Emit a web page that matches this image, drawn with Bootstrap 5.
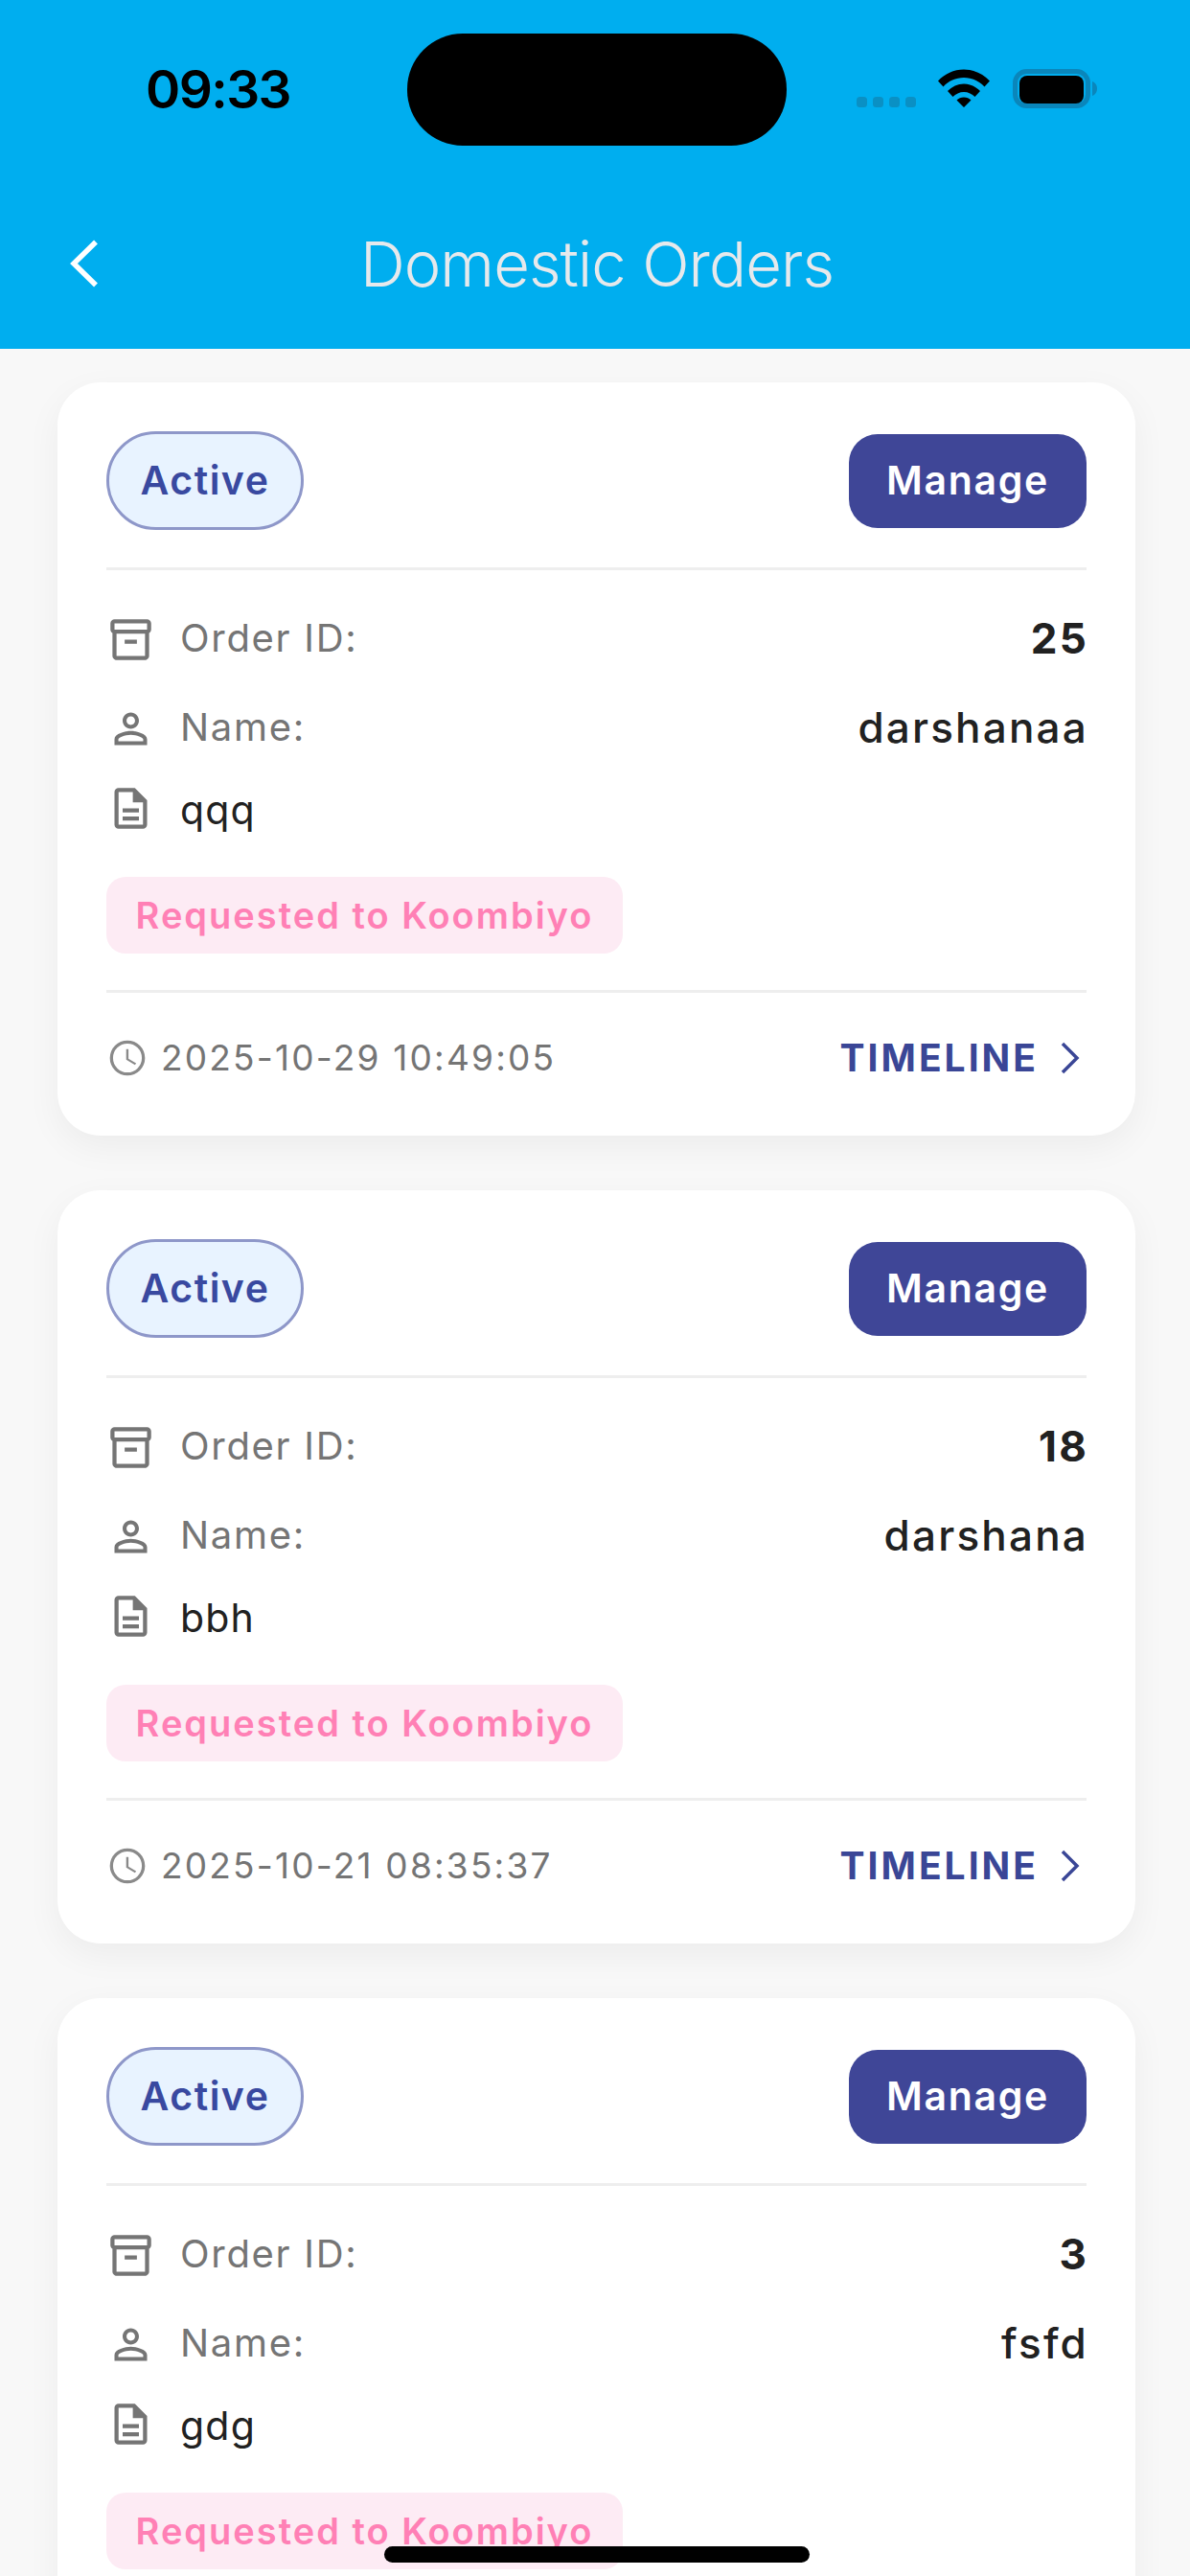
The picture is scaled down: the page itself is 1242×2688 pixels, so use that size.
<!DOCTYPE html>
<html lang="en">
<head>
<meta charset="utf-8">
<title>Domestic Orders</title>
<link rel="stylesheet" href="https://cdn.jsdelivr.net/npm/bootstrap@5.3.0/dist/css/bootstrap.min.css">
<style>
html,body{margin:0;height:2688px;overflow:hidden}
body{background:#f8f8f8;font-family:Inter,"Liberation Sans",sans-serif;color:#212121;position:relative}
.app-top{background:#00aeef;height:364px;color:#e6e9ec}
.status-line{height:152px;padding-top:35px;padding-left:152px}
.clock-time{font-weight:600;font-size:55px;line-height:117px;color:#000;width:273px;letter-spacing:-1.6px}
.island{width:396px;height:117px;background:#000;border-radius:58px}
.status-icons{margin-left:73px;height:117px;padding-top:37px}
.sig-dots{gap:6px;padding-top:29px;width:85px}
.sig-dots i{display:block;width:11px;height:11px;border-radius:3.5px;background:#0a90c4}
.title-line{height:212px;padding-top:86px;padding-left:73px}
.back-icon{width:30px;height:50px;margin-top:12px}
.page-title{font-size:65px;line-height:76px;font-weight:300;width:1066px;padding-right:26px;text-align:center;letter-spacing:-.9px;color:#e6e9ec}
.order-list{padding:35px 57px 0 60px;height:2324px;overflow:hidden}
.order-card{border:0;border-radius:45px;background:#fff;box-shadow:0 12px 36px rgba(0,0,0,.05);padding:51px 51px 55px;margin-bottom:57px}
.state-pill{width:206px;height:103px;border:3px solid #8e97c9;background:#e8f3ff;border-radius:52px;color:#3949a0;font-size:41px;font-weight:600;letter-spacing:1.5px}
.manage-btn{width:248px;height:98px;border:0;border-radius:30px;background:#3f4697;color:#fff;font-size:41px;font-weight:600;letter-spacing:1.7px;padding:0}
.manage-btn:hover{background:#3f4697;color:#fff}
.rule{height:3px;background:#eee;margin:39px 0 0}
.info-line{height:51px}
.info-line svg{width:51px;height:51px;margin-right:27px;fill:#757575;flex:none}
.first-line{margin-top:46.5px}
.second-line{margin-top:42px}
.third-line{margin-top:32px}
.info-key{font-size:40px;color:#757575;letter-spacing:1.7px;margin-left:-1px;margin-top:-3px}
.info-num{font-size:44px;font-weight:700;color:#212121;letter-spacing:2.2px;margin-top:-3px;margin-right:-2px}
.info-val{font-size:44px;font-weight:500;color:#212121;letter-spacing:2.2px;margin-top:-3px;margin-right:-2px}
.info-text{font-size:41px;color:#212121;letter-spacing:1.2px;margin-top:6px;margin-left:-1px}
.req-tag{margin-top:46.5px;height:80px;width:539px;background:#fdebf4;border-radius:20px;color:#ff80b5;font-size:38px;font-weight:600;letter-spacing:2px}
.foot-rule{margin-top:38px}
.foot-line{height:52px;margin-top:42px}
.foot-time{font-size:37px;color:#757575;letter-spacing:2.2px}
.foot-time svg{width:44px;height:44px;margin-right:13px;fill:#8a8a8a;flex:none}
.timeline-link{font-size:39px;font-weight:700;color:#3a4696;letter-spacing:3px}
.timeline-link svg{width:22px;height:36px;margin-left:22px;margin-right:6px}
.home-bar{position:absolute;left:401px;top:2657px;width:444px;height:17px;background:#000;border-radius:9px}
</style>
</head>
<body>
<header class="app-top">
  <div class="status-line d-flex align-items-start">
    <div class="clock-time">09:33</div>
    <div class="island"></div>
    <div class="status-icons d-flex">
      <div class="sig-dots d-flex align-items-start"><i></i><i></i><i></i><i></i></div>
      <svg width="54" height="40" viewBox="0 0 54 40"><path d="M0 12.500C7 5 16.500 .5 27 .5S47 5 54 12.500L48.500 18.500C43 12.500 35.500 9 27 9S11 12.500 5.500 18.500Z M10 23C14.500 18.500 20.500 15.500 27 15.500S39.500 18.500 44 23L38.500 29C35.500 26 31.500 24 27 24S18.500 26 15.500 29Z M19.500 32.500C21.500 30.500 24 29.500 27 29.500S32.500 30.500 34.500 32.500L27 40Z" fill="#000"/></svg>
      <svg class="ms-4" width="88" height="42" viewBox="0 0 88 42"><rect x="2.500" y="2.500" width="76" height="36" rx="12" fill="none" stroke="#0a86bb" stroke-width="5"/><rect x="7" y="7" width="67" height="29" rx="8" fill="#000"/><path d="M83 13c3 1 5 4 5 7.500S86 27 83 28Z" fill="#0a86bb"/></svg>
    </div>
  </div>
  <div class="title-line d-flex align-items-start">
    <svg class="back-icon" viewBox="0 0 30 50"><path d="M27 2.500 4 25l23 22.500" fill="none" stroke="#fff" stroke-width="5.500"/></svg>
    <h1 class="page-title m-0">Domestic Orders</h1>
  </div>
</header>
<main class="order-list">
  <section class="card order-card">
    <div class="d-flex justify-content-between align-items-center">
      <span class="state-pill d-flex align-items-center justify-content-center">Active</span>
      <button type="button" class="btn manage-btn">Manage</button>
    </div>
    <div class="rule"></div>
    <div class="info-line first-line d-flex align-items-center">
      <svg viewBox="0 0 24 24"><path d="M20 2H4c-1 0-2 .9-2 2v3.010c0 .72.43 1.340 1 1.690V20c0 1.100 1.100 2 2 2h14c.9 0 2-.9 2-2V8.700c.57-.35 1-.97 1-1.690V4c0-1.100-1-2-2-2zm-1 18H5V9h14v11zm1-13H4V4h16v3zM9 12h6v2H9z"/></svg>
      <span class="info-key">Order ID:</span><span class="info-num ms-auto">25</span>
    </div>
    <div class="info-line second-line d-flex align-items-center">
      <svg viewBox="0 0 24 24"><path d="M12 5.900c1.160 0 2.100.94 2.100 2.100s-.94 2.100-2.100 2.100S9.900 9.160 9.900 8s.94-2.100 2.100-2.100m0 9c2.970 0 6.100 1.460 6.100 2.100v1.100H5.900V17c0-.64 3.130-2.100 6.100-2.100M12 4C9.790 4 8 5.790 8 8s1.790 4 4 4 4-1.790 4-4-1.790-4-4-4zm0 9c-2.670 0-8 1.340-8 4v3h16v-3c0-2.660-5.330-4-8-4z"/></svg>
      <span class="info-key">Name:</span><span class="info-val ms-auto">darshanaa</span>
    </div>
    <div class="info-line third-line d-flex align-items-center">
      <svg viewBox="0 0 24 24"><path d="M8 16h8v2H8zm0-4h8v2H8zm6-10H6c-1.100 0-2 .9-2 2v16c0 1.100.89 2 1.990 2H18c1.100 0 2-.9 2-2V8l-6-6zm4 18H6V4h7v5h5v11z"/></svg>
      <span class="info-text">qqq</span>
    </div>
    <div class="req-tag d-flex align-items-center justify-content-center">Requested to Koombiyo</div>
    <div class="rule foot-rule"></div>
    <div class="foot-line d-flex align-items-center justify-content-between">
      <span class="foot-time d-flex align-items-center"><svg viewBox="0 0 24 24"><path d="M12 2a10 10 0 1 0 0 20 10 10 0 0 0 0-20zm0 18.200a8.200 8.200 0 1 1 0-16.400 8.200 8.200 0 0 1 0 16.400zM12.600 7h-1.300v6l5 3 .65-1.050-4.350-2.600z"/></svg>2025-10-29 10:49:05</span>
      <span class="timeline-link d-flex align-items-center">TIMELINE<svg viewBox="0 0 22 36"><path d="M3 3l15 15L3 33" fill="none" stroke="#3a4696" stroke-width="3.500"/></svg></span>
    </div>
  </section>
  <section class="card order-card">
    <div class="d-flex justify-content-between align-items-center">
      <span class="state-pill d-flex align-items-center justify-content-center">Active</span>
      <button type="button" class="btn manage-btn">Manage</button>
    </div>
    <div class="rule"></div>
    <div class="info-line first-line d-flex align-items-center">
      <svg viewBox="0 0 24 24"><path d="M20 2H4c-1 0-2 .9-2 2v3.010c0 .72.43 1.340 1 1.690V20c0 1.100 1.100 2 2 2h14c.9 0 2-.9 2-2V8.700c.57-.35 1-.97 1-1.690V4c0-1.100-1-2-2-2zm-1 18H5V9h14v11zm1-13H4V4h16v3zM9 12h6v2H9z"/></svg>
      <span class="info-key">Order ID:</span><span class="info-num ms-auto">18</span>
    </div>
    <div class="info-line second-line d-flex align-items-center">
      <svg viewBox="0 0 24 24"><path d="M12 5.900c1.160 0 2.100.94 2.100 2.100s-.94 2.100-2.100 2.100S9.900 9.160 9.900 8s.94-2.100 2.100-2.100m0 9c2.970 0 6.100 1.460 6.100 2.100v1.100H5.900V17c0-.64 3.130-2.100 6.100-2.100M12 4C9.790 4 8 5.790 8 8s1.790 4 4 4 4-1.790 4-4-1.790-4-4-4zm0 9c-2.670 0-8 1.340-8 4v3h16v-3c0-2.660-5.330-4-8-4z"/></svg>
      <span class="info-key">Name:</span><span class="info-val ms-auto">darshana</span>
    </div>
    <div class="info-line third-line d-flex align-items-center">
      <svg viewBox="0 0 24 24"><path d="M8 16h8v2H8zm0-4h8v2H8zm6-10H6c-1.100 0-2 .9-2 2v16c0 1.100.89 2 1.990 2H18c1.100 0 2-.9 2-2V8l-6-6zm4 18H6V4h7v5h5v11z"/></svg>
      <span class="info-text">bbh</span>
    </div>
    <div class="req-tag d-flex align-items-center justify-content-center">Requested to Koombiyo</div>
    <div class="rule foot-rule"></div>
    <div class="foot-line d-flex align-items-center justify-content-between">
      <span class="foot-time d-flex align-items-center"><svg viewBox="0 0 24 24"><path d="M12 2a10 10 0 1 0 0 20 10 10 0 0 0 0-20zm0 18.200a8.200 8.200 0 1 1 0-16.400 8.200 8.200 0 0 1 0 16.400zM12.600 7h-1.300v6l5 3 .65-1.050-4.350-2.600z"/></svg>2025-10-21 08:35:37</span>
      <span class="timeline-link d-flex align-items-center">TIMELINE<svg viewBox="0 0 22 36"><path d="M3 3l15 15L3 33" fill="none" stroke="#3a4696" stroke-width="3.500"/></svg></span>
    </div>
  </section>
  <section class="card order-card">
    <div class="d-flex justify-content-between align-items-center">
      <span class="state-pill d-flex align-items-center justify-content-center">Active</span>
      <button type="button" class="btn manage-btn">Manage</button>
    </div>
    <div class="rule"></div>
    <div class="info-line first-line d-flex align-items-center">
      <svg viewBox="0 0 24 24"><path d="M20 2H4c-1 0-2 .9-2 2v3.010c0 .72.43 1.340 1 1.690V20c0 1.100 1.100 2 2 2h14c.9 0 2-.9 2-2V8.700c.57-.35 1-.97 1-1.690V4c0-1.100-1-2-2-2zm-1 18H5V9h14v11zm1-13H4V4h16v3zM9 12h6v2H9z"/></svg>
      <span class="info-key">Order ID:</span><span class="info-num ms-auto">3</span>
    </div>
    <div class="info-line second-line d-flex align-items-center">
      <svg viewBox="0 0 24 24"><path d="M12 5.900c1.160 0 2.100.94 2.100 2.100s-.94 2.100-2.100 2.100S9.900 9.160 9.900 8s.94-2.100 2.100-2.100m0 9c2.970 0 6.100 1.460 6.100 2.100v1.100H5.900V17c0-.64 3.130-2.100 6.100-2.100M12 4C9.790 4 8 5.790 8 8s1.790 4 4 4 4-1.790 4-4-1.790-4-4-4zm0 9c-2.670 0-8 1.340-8 4v3h16v-3c0-2.660-5.330-4-8-4z"/></svg>
      <span class="info-key">Name:</span><span class="info-val ms-auto">fsfd</span>
    </div>
    <div class="info-line third-line d-flex align-items-center">
      <svg viewBox="0 0 24 24"><path d="M8 16h8v2H8zm0-4h8v2H8zm6-10H6c-1.100 0-2 .9-2 2v16c0 1.100.89 2 1.990 2H18c1.100 0 2-.9 2-2V8l-6-6zm4 18H6V4h7v5h5v11z"/></svg>
      <span class="info-text">gdg</span>
    </div>
    <div class="req-tag d-flex align-items-center justify-content-center">Requested to Koombiyo</div>
  </section>
</main>
<div class="home-bar"></div>
<script src="https://cdn.jsdelivr.net/npm/bootstrap@5.3.0/dist/js/bootstrap.bundle.min.js"></script>
</body>
</html>
